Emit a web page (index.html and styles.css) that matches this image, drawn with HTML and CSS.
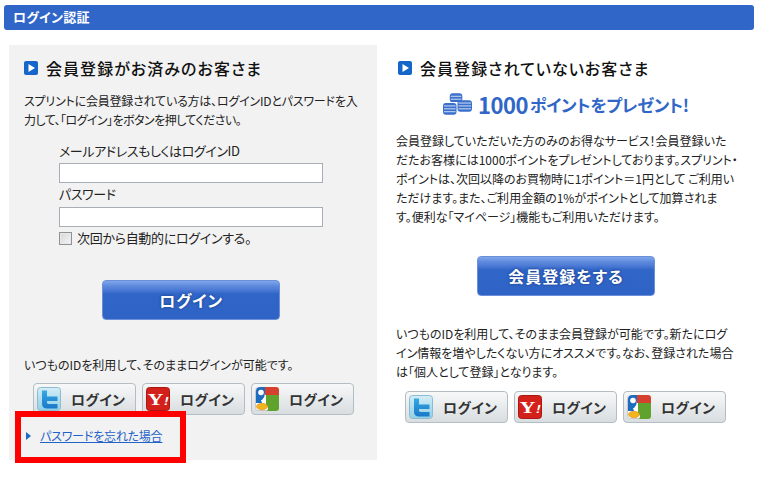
FILE: index.html
```html
<!DOCTYPE html>
<html lang="ja">
<head>
<meta charset="utf-8">
<title>ログイン認証</title>
<link rel="stylesheet" href="styles.css">
</head>
<body>
<div class="page">
  <h1 class="bar">ログイン認証</h1>
  <div class="cols">
    <section class="panel">
      <h2 class="heading"><svg class="mark" viewBox="0 0 14 14"><rect width="14" height="14" rx="2" fill="#1467c8"/><path d="M4.5 3 L11 7 L4.5 11Z" fill="#fff"/></svg>会員登録がお済みのお客さま</h2>
      <p class="copy lead"><span class="t1">スプリントに会員登録されている方は、ログインIDとパスワードを入</span><br><span class="t2">力して、「ログイン」をボタンを押してください。</span></p>
      <form class="form">
        <label class="label" for="mail">メールアドレスもしくはログインID</label>
        <input class="field" id="mail" type="text">
        <label class="label second" for="pass">パスワード</label>
        <input class="field field2" id="pass" type="password">
        <label class="check"><span class="box"></span><span class="check-text">次回から自動的にログインする。</span></label>
      </form>
      <div class="cta login-cta"><a class="primary">ログイン</a></div>
      <p class="copy note">いつものIDを利用して、そのままログインが可能です。</p>
      <div class="socials">
        <a class="social"><svg class="ico" viewBox="0 0 24 24"><defs><linearGradient id="tw1" x1="0" y1="0" x2="0" y2="1"><stop offset="0" stop-color="#d3edf6"/><stop offset="1" stop-color="#8fcfe6"/></linearGradient><linearGradient id="tw2" x1="0" y1="0" x2="0" y2="1"><stop offset="0" stop-color="#35a8e4"/><stop offset="1" stop-color="#1a78c8"/></linearGradient></defs><rect x=".5" y=".5" width="23" height="23" rx="3" fill="url(#tw1)" stroke="#8dbcd0"/><path d="M5 3.500h5v6h10.500v4.500H10v1.500q0 1.500 2 1.500h8.500v4.500H10q-5 0-5-5Z" fill="url(#tw2)"/></svg><span>ログイン</span></a>
        <a class="social"><svg class="ico" viewBox="0 0 24 24"><rect x=".5" y=".5" width="23" height="23" rx="3" fill="#d3201a" stroke="#a81712"/><text transform="translate(1.500 17.500) scale(1.300 1)" class="y">Y<tspan class="yb">!</tspan></text></svg><span>ログイン</span></a>
        <a class="social"><svg class="ico" viewBox="0 0 24 24"><rect x=".5" y=".5" width="23" height="23" rx="3" fill="#fff" stroke="#c8c8c8"/><path d="M10 0h11q3 0 3 3v5H10Z" fill="#d6402f"/><path d="M11 8h13v13q0 3-3 3h-9q2-3 0-5-1.500-1.500-1-3Z" fill="#5fa22e"/><path d="M1 4q0-4 5-4h4v6q0 4-3 7h-1l1 3H1Z" fill="#1c6cc0"/><circle cx="6" cy="5.500" r="2.800" fill="#fff"/><ellipse cx="7" cy="19.500" rx="5.500" ry="3.200" fill="#f4b41e" stroke="#e08a10" stroke-width=".6"/></svg><span>ログイン</span></a>
      </div>
      <p class="forgot"><span class="tri"></span><a class="link" href="#">パスワードを忘れた場合</a></p>
    </section>
    <section class="side">
      <h2 class="heading side-heading"><svg class="mark" viewBox="0 0 14 14"><rect width="14" height="14" rx="2" fill="#1467c8"/><path d="M4.5 3 L11 7 L4.5 11Z" fill="#fff"/></svg>会員登録されていないお客さま</h2>
      <div class="promo"><svg class="coins" viewBox="0 0 30 22"><g fill="#3a70cc"><rect x="7" y="0" width="13" height="9" rx="3"/><rect x="15" y="7" width="15" height="12" rx="3"/><rect x="0" y="10" width="14" height="12" rx="3"/></g><g stroke="#fff" stroke-width=".8"><path d="M8 3h11M8 6h11M16 10h13M16 13h13M16 16h13M1 13h12M1 16h12M1 19h12"/></g></svg><span class="num">1000</span><span>ポイントをプレゼント!</span></div>
      <p class="copy">会員登録していただいた方のみのお得なサービス！会員登録いた<br>だたお客様には1000ポイントをプレゼントしております。スプリント・<br>ポイントは、次回以降のお買物時に1ポイント＝1円として ご利用い<br>ただけます。また、ご利用金額の1%がポイントとして加算されま<br>す。便利な「マイページ」機能もご利用いただけます。</p>
      <div class="cta reg-cta"><a class="primary wide">会員登録をする</a></div>
      <p class="copy after-cta">いつものIDを利用して、そのまま会員登録が可能です。新たにログ<br>イン情報を増やしたくない方にオススメです。なお、登録された場合<br>は「個人として登録」となります。</p>
      <div class="socials side-socials">
        <a class="social"><svg class="ico" viewBox="0 0 24 24"><rect x=".5" y=".5" width="23" height="23" rx="3" fill="url(#tw1)" stroke="#8dbcd0"/><path d="M5 3.500h5v6h10.500v4.500H10v1.500q0 1.500 2 1.500h8.500v4.500H10q-5 0-5-5Z" fill="url(#tw2)"/></svg><span>ログイン</span></a>
        <a class="social"><svg class="ico" viewBox="0 0 24 24"><rect x=".5" y=".5" width="23" height="23" rx="3" fill="#d3201a" stroke="#a81712"/><text transform="translate(1.500 17.500) scale(1.300 1)" class="y">Y<tspan class="yb">!</tspan></text></svg><span>ログイン</span></a>
        <a class="social"><svg class="ico" viewBox="0 0 24 24"><rect x=".5" y=".5" width="23" height="23" rx="3" fill="#fff" stroke="#c8c8c8"/><path d="M10 0h11q3 0 3 3v5H10Z" fill="#d6402f"/><path d="M11 8h13v13q0 3-3 3h-9q2-3 0-5-1.500-1.500-1-3Z" fill="#5fa22e"/><path d="M1 4q0-4 5-4h4v6q0 4-3 7h-1l1 3H1Z" fill="#1c6cc0"/><circle cx="6" cy="5.500" r="2.800" fill="#fff"/><ellipse cx="7" cy="19.500" rx="5.500" ry="3.200" fill="#f4b41e" stroke="#e08a10" stroke-width=".6"/></svg><span>ログイン</span></a>
      </div>
    </section>
  </div>
  <div class="highlight"></div>
</div>
</body>
</html>
```

FILE: styles.css
```css
* { box-sizing: border-box; }
html, body { margin: 0; padding: 0; background: #fff; }
body {
  font-family: "Noto Sans CJK JP", "Liberation Sans", sans-serif;
  font-size: 12px;
  color: #222;
  font-feature-settings: "palt";
}
.page { position: relative; width: 767px; height: 491px; padding: 5px 13px 0 4px; overflow: hidden; }
.bar {
  margin: 0;
  height: 25px;
  padding-left: 9px;
  background: #3066c8;
  border-radius: 3px;
  color: #fff;
  font-size: 13px;
  font-weight: 700;
  letter-spacing: .3px;
  line-height: 24px;
}
.cols { display: flex; margin: 15px 0 0 5px; }
.panel { flex: none; width: 368px; height: 415px; background: #f2f2f2; padding: 13px 15px 0; }
.side { flex: none; width: 345px; margin-left: 19px; padding-top: 13px; }
.heading {
  display: flex;
  align-items: center;
  margin: 0;
  height: 20px;
  font-size: 16px;
  font-weight: 500;
  letter-spacing: 1.05px;
  color: #111;
  white-space: nowrap;
}
.mark { width: 14px; height: 14px; margin-right: 8px; flex: none; }
.side-heading { margin-left: 2px; }
.copy { margin: 0; line-height: 19px; white-space: nowrap; }
.lead { margin-top: 13px; }
.t1 { letter-spacing: -.2px; }
.t2 { letter-spacing: -.55px; }
.form { margin: 12px 0 0 35px; display: flex; flex-direction: column; align-items: flex-start; }
.label { font-size: 13px; line-height: 19px; height: 19px; letter-spacing: -.4px; }
.second { margin-top: 1px; }
.field {
  display: block;
  width: 264px;
  height: 20px;
  margin: 3px 0 0;
  border: 1px solid #a9adb5;
  background: #fff;
  padding: 0 2px;
}
.field2 { margin-top: 4px; }
.check { display: flex; align-items: center; margin-top: 2px; height: 18px; font-size: 13px; }
.check-text { letter-spacing: -.3px; margin-top: -2px; }
.box { width: 13px; height: 13px; margin-right: 5px; border: 1px solid #8f9296; background: linear-gradient(135deg, #d8d8d8, #f4f4f4); box-shadow: inset 0 0 0 1px #e8e8e8; }
.cta { display: flex; }
.login-cta { margin: 33px 0 0 78px; }
.reg-cta { margin: 30px 0 0 81px; }
.primary {
  display: block;
  width: 178px;
  height: 40px;
  border: 1px solid #6c90d8;
  border-radius: 4px;
  background: linear-gradient(#7fa6ec 0, #5c88dc 14%, #4f7cd6 22%, #3066c8 34%, #2f63c6 100%);
  color: #fff;
  font-size: 16px;
  font-weight: 700;
  letter-spacing: .8px;
  line-height: 38px;
  text-align: center;
  text-shadow: 0 0 3px #16387c;
}
.wide { letter-spacing: 1px; }
.after-cta { margin-top: 28px; }
.note { margin-top: 35px; }
.socials { display: flex; gap: 6px; margin: 9px 0 0 9px; }
.side-socials { margin: 10px 0 0 9px; }
.social {
  display: flex;
  align-items: center;
  width: 103px;
  height: 32px;
  padding-left: 3px;
  border: 1px solid #b4bdc4;
  border-radius: 4px;
  background: linear-gradient(#f7f8f8, #d8dde0);
  color: #333;
  font-size: 14px;
  font-weight: 700;
  letter-spacing: .4px;
}
.social span { margin-left: 10px; }
.ico { width: 24px; height: 24px; flex: none; }
.y { font-family: "Liberation Serif", serif; font-size: 17px; font-weight: 700; fill: #fff; }
.yb { font-size: 11px; font-style: italic; font-family: "Liberation Sans", sans-serif; }
.forgot { display: flex; align-items: center; margin: 13px 0 0 2px; line-height: 16px; }
.tri { width: 0; height: 0; margin-right: 9px; border-left: 5px solid #1c68c4; border-top: 4px solid transparent; border-bottom: 4px solid transparent; }
.link { color: #1f62c8; text-decoration: underline; letter-spacing: -.2px; }
.promo {
  display: flex;
  align-items: center;
  height: 22px;
  margin: 15px 0 0 47px;
  color: #3066c8;
  font-size: 17px;
  font-weight: 700;
  letter-spacing: -.3px;
  white-space: nowrap;
}
.coins { width: 29px; height: 22px; margin-right: 6px; flex: none; }
.num { font-size: 22px; letter-spacing: -.5px; margin-right: 2px; }
.promo + .copy { margin-top: 16px; }
.highlight {
  position: absolute;
  left: 15px;
  top: 411px;
  width: 171px;
  height: 52px;
  border: 6px solid #ff0000;
}
```
